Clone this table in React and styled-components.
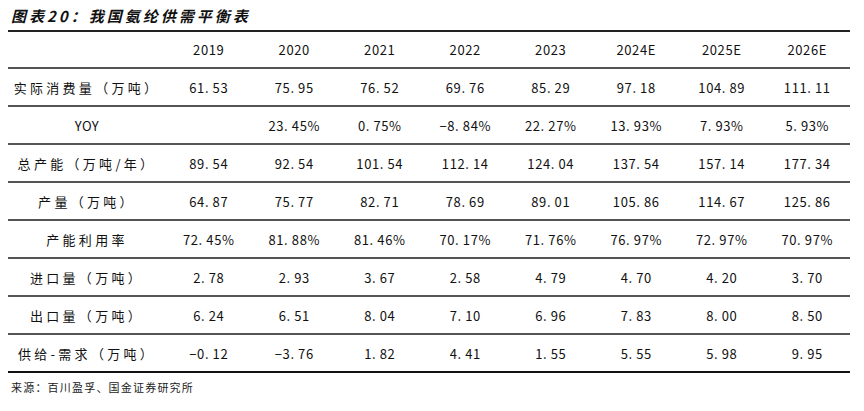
import React from 'react'
import styled, { createGlobalStyle } from 'styled-components'

const GlobalStyle = createGlobalStyle`
  html, body {
    margin: 0;
    padding: 0;
    background: #fff;
  }
  body {
    font-family: "Noto Sans CJK SC", "Noto Sans", sans-serif;
    color: #111;
  }
`

const years = ['2019', '2020', '2021', '2022', '2023', '2024E', '2025E', '2026E']

const rows = [
  { label: '实际消费量（万吨）', values: ['61.53', '75.95', '76.52', '69.76', '85.29', '97.18', '104.89', '111.11'] },
  { label: 'YOY', latin: true, values: ['', '23.45%', '0.75%', '-8.84%', '22.27%', '13.93%', '7.93%', '5.93%'] },
  { label: '总产能（万吨/年）', values: ['89.54', '92.54', '101.54', '112.14', '124.04', '137.54', '157.14', '177.34'] },
  { label: '产量（万吨）', values: ['64.87', '75.77', '82.71', '78.69', '89.01', '105.86', '114.67', '125.86'] },
  { label: '产能利用率', values: ['72.45%', '81.88%', '81.46%', '70.17%', '71.76%', '76.97%', '72.97%', '70.97%'] },
  { label: '进口量（万吨）', values: ['2.78', '2.93', '3.67', '2.58', '4.79', '4.70', '4.20', '3.70'] },
  { label: '出口量（万吨）', values: ['6.24', '6.51', '8.04', '7.10', '6.96', '7.83', '8.00', '8.50'] },
  { label: '供给-需求（万吨）', values: ['-0.12', '-3.76', '1.82', '4.41', '1.55', '5.55', '5.98', '9.95'] },
]

// numbers in the source use a wide period, so space it out a little
const fmt = v => v.replace('.', '. ').replace(/^-/, '−')

class App extends React.Component {
  render() {
    return (
      <Page>
        <GlobalStyle />
        <Title>图表20：我国氨纶供需平衡表</Title>
        <Table>
          <Row head>
            <LabelCell />
            {years.map(y => <Cell key={y}>{y}</Cell>)}
          </Row>
          {rows.map((r, i) => (
            <Row key={r.label} last={i === rows.length - 1}>
              <LabelCell latin={r.latin}>{r.label}</LabelCell>
              {r.values.map((v, j) => <Cell key={j}>{fmt(v)}</Cell>)}
            </Row>
          ))}
        </Table>
        <Source>来源：百川盈孚、国金证券研究所</Source>
      </Page>
    )
  }
}

const Page = styled.div`
  width: 864px;
  height: 411px;
  padding: 7px 14px 0 8px;
  box-sizing: border-box;
  display: flex;
  flex-direction: column;
`
const Title = styled.div`
  font-size: 15px;
  font-weight: 700;
  font-style: italic;
  line-height: 18px;
  height: 23px;
  padding-left: 3px;
  letter-spacing: 3px;
  color: #111;
`
const Table = styled.div`
  width: 842px;
  border-top: 2px solid #222;
  display: flex;
  flex-direction: column;
`
const Row = styled.div`
  display: grid;
  grid-template-columns: 158px repeat(8, 1fr);
  height: ${p => (p.head ? '35px' : '36px')};
  align-items: center;
  border-bottom: 2px solid ${p => (p.last ? '#111' : '#555')};
`
const Cell = styled.div`
  text-align: center;
  font-size: 13px;
  letter-spacing: 0.6px;
  white-space: pre;
  color: #111;
`
const LabelCell = styled(Cell)`
  letter-spacing: ${p => (p.latin ? '0.5px' : '3.3px')};
`
const Source = styled.div`
  margin-top: 6px;
  padding-left: 3px;
  font-size: 11px;
  letter-spacing: 1.2px;
  color: #222;
`

export default App
